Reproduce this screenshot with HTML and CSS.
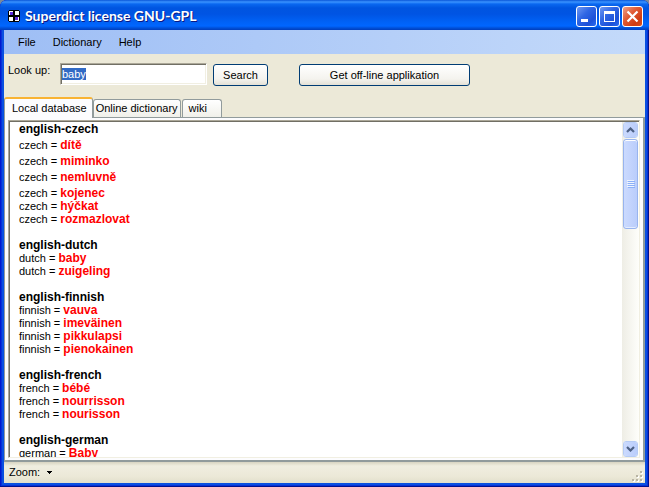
FILE: index.html
```
<!DOCTYPE html>
<html lang="en">
<head>
    <meta charset="utf-8"/>
    <meta content="width=device-width, initial-scale=1.0" name="viewport"/>
    <title>Superdict license GNU-GPL</title>
    <link rel="stylesheet" href="styles.css">
</head>
<body>
    <div class="window">
        <header class="title-bar">
            <svg class="app-icon" width="12" height="12" viewBox="0 0 12 12" shape-rendering="crispEdges">
                <path d="M1 0h10v1h1v10h-1v1H1v-1H0V1h1z" fill="#000"/>
                <path d="M1 1h4v4H1zM7 1h4v4H7zM1 7h4v4H1zM7 7h4v4H7z" fill="#fff"/>
                <path d="M2 2h3v3H2zM7 7h3v3H7z" fill="#5a28e0"/>
            </svg>
            <h1>Superdict license GNU-GPL</h1>
            <div class="window-buttons">
                <button type="button" class="window-button" aria-label="Minimize">
                    <svg width="19" height="19" viewBox="0 0 19 19" shape-rendering="crispEdges"><path d="M4 12h7v3H4z" fill="#fff"/></svg>
                </button>
                <button type="button" class="window-button" aria-label="Maximize">
                    <svg width="19" height="19" viewBox="0 0 19 19" shape-rendering="crispEdges"><path d="M4 4h11v11H4zM5 7v7h9V7z" fill="#fff" fill-rule="evenodd"/></svg>
                </button>
                <button type="button" class="window-button close" aria-label="Close">
                    <svg width="19" height="19" viewBox="0 0 19 19"><path d="M4.500 4.500l10 10M14.500 4.500l-10 10" stroke="#fff" stroke-width="2.200"/></svg>
                </button>
            </div>
        </header>
        <nav class="menu-bar">
            <button type="button">File</button>
            <button type="button">Dictionary</button>
            <button type="button">Help</button>
        </nav>
        <form class="search-form" onsubmit="event.preventDefault()">
            <label for="lookup">Look up:</label>
            <input type="text" id="lookup" value="baby" autocomplete="off" spellcheck="false"/>
            <button type="submit" class="xp-button">Search</button>
            <button type="button" class="xp-button wide">Get off-line applikation</button>
        </form>
        <div class="tabs" role="tablist">
            <button type="button" role="tab" class="tab active" aria-selected="true">Local database</button>
            <button type="button" role="tab" class="tab">Online dictionary</button>
            <button type="button" role="tab" class="tab wiki">wiki</button>
        </div>
        <main class="panel">
            <div class="browser">
                <div class="results">
                    <section>
                        <h2>english-czech</h2>
                        <p class="tall">czech = <b>dítě</b></p>
                        <p class="tall">czech = <b>miminko</b></p>
                        <p class="tall">czech = <b>nemluvně</b></p>
                        <p class="tall">czech = <b>kojenec</b></p>
                        <p>czech = <b>hýčkat</b></p>
                        <p>czech = <b>rozmazlovat</b></p>
                    </section>
                    <section>
                        <h2>english-dutch</h2>
                        <p>dutch = <b>baby</b></p>
                        <p>dutch = <b>zuigeling</b></p>
                    </section>
                    <section>
                        <h2>english-finnish</h2>
                        <p>finnish = <b>vauva</b></p>
                        <p>finnish = <b>imeväinen</b></p>
                        <p>finnish = <b>pikkulapsi</b></p>
                        <p>finnish = <b>pienokainen</b></p>
                    </section>
                    <section>
                        <h2>english-french</h2>
                        <p>french = <b>bébé</b></p>
                        <p>french = <b>nourrisson</b></p>
                        <p>french = <b>nourisson</b></p>
                    </section>
                    <section>
                        <h2>english-german</h2>
                        <p>german = <b>Baby</b></p>
                    </section>
                </div>
                <div class="scrollbar">
                    <button type="button" class="scroll-button" aria-label="Scroll up">
                        <svg width="9" height="6" viewBox="0 0 9 6"><path d="M1 5l3.500-3.500L8 5" fill="none" stroke="#4d6185" stroke-width="2.200"/></svg>
                    </button>
                    <div class="track">
                        <div class="thumb">
                            <svg width="8" height="8" viewBox="0 0 8 8" shape-rendering="crispEdges">
                                <path d="M0 0h7v1H0zM0 2h7v1H0zM0 4h7v1H0zM0 6h7v1H0z" fill="#eef4fe"/>
                                <path d="M1 1h7v1H1zM1 3h7v1H1zM1 5h7v1H1zM1 7h7v1H1z" fill="#8cb0f8"/>
                            </svg>
                        </div>
                    </div>
                    <button type="button" class="scroll-button" aria-label="Scroll down">
                        <svg width="9" height="6" viewBox="0 0 9 6"><path d="M1 1l3.500 3.500L8 1" fill="none" stroke="#4d6185" stroke-width="2.200"/></svg>
                    </button>
                </div>
            </div>
        </main>
        <footer class="status-bar">
            <button type="button" class="zoom">
                Zoom:
                <svg width="5" height="3" viewBox="0 0 5 3" shape-rendering="crispEdges"><path d="M0 0h5v1H4v1H3v1H2V2H1V1H0z"/></svg>
            </button>
            <svg class="grip" width="12" height="12" viewBox="0 0 12 12" shape-rendering="crispEdges">
                <path d="M9 1h2v2H9zM5 5h2v2H5zM9 5h2v2H9zM1 9h2v2H1zM5 9h2v2H5zM9 9h2v2H9z" fill="#fff"/>
                <path d="M8 0h2v2H8zM4 4h2v2H4zM8 4h2v2H8zM0 8h2v2H0zM4 8h2v2H4zM8 8h2v2H8z" fill="#b8b4a3"/>
            </svg>
        </footer>
    </div>
    <script>
        var lookup = document.getElementById('lookup');
        lookup.focus();
        lookup.select();
    </script>
</body>
</html>
```
FILE: styles.css
```
* {
    box-sizing: border-box;
}

body {
    margin: 0;
    background-color: #7a8a9a;
    font-family: "Liberation Sans", Arial, sans-serif;
    font-size: 11px;
    line-height: 13px;
    color: #000;
}

h1, h2, p {
    margin: 0;
}

button,
input {
    margin: 0;
    font: inherit;
    color: inherit;
}

button {
    display: flex;
    align-items: center;
    justify-content: center;
    padding: 0;
    border: none;
    background: none;
    white-space: nowrap;
}

svg {
    display: block;
    flex: none;
}

.window {
    display: flex;
    flex-direction: column;
    height: 100vh;
    padding: 0 4px 4px;
    border-radius: 7px 7px 0 0;
    overflow: hidden;
    background-color: #0a50e0;
    box-shadow: inset -1px -1px #00138c, inset 1px 0 #0019cf, inset -2px -2px #0831d9, inset 2px 0 #0831d9;
}

.title-bar {
    display: flex;
    align-items: center;
    flex: none;
    height: 30px;
    margin: 0 -4px;
    padding: 2px 6px 0 8px;
    background: linear-gradient(#0a56d8 0, #3a93ff 2px, #0a68f0 4px, #0055e0 8px, #0054e3 14px, #0062f6 22px, #0066ff 26px, #0050d8 28px, #003dbc 30px);
}

.title-bar h1 {
    flex: 1;
    margin-left: 5px;
    font-family: Lato, "Trebuchet MS", sans-serif;
    font-size: 14px;
    line-height: 16px;
    color: #fff;
    text-shadow: 1px 1px #0a1883;
}

.window-buttons {
    display: flex;
    gap: 2px;
}

.window-button {
    width: 21px;
    height: 21px;
    border: 1px solid #fff;
    border-radius: 3px;
    background: linear-gradient(135deg, #6f98f2, #2f66e4 40%, #1c50d8 75%, #2a6cf2);
}

.window-button.close {
    background: linear-gradient(135deg, #f0a088, #e05a34 40%, #d03c12 75%, #d8501e);
}

.menu-bar {
    display: flex;
    flex: none;
    gap: 17px;
    height: 24px;
    padding: 0 14px;
    background: linear-gradient(90deg, #9ebef5, #c4dafa);
}

.search-form {
    display: flex;
    align-items: flex-start;
    flex: none;
    padding: 9px 4px 11px;
    background-color: #ece9d8;
}

.search-form label {
    width: 52px;
    padding-top: 1px;
}

.search-form input {
    width: 147px;
    height: 22px;
    padding: 0 1px;
    border: 1px solid;
    border-color: #aca899 #fff #fff #aca899;
    box-shadow: inset 1px 1px #716f64, inset -1px -1px #f1efe2;
    background-color: #fff;
    outline: none;
}

.search-form input::selection {
    background-color: #316ac5;
    color: #fff;
}

.xp-button {
    width: 55px;
    height: 22px;
    margin-left: 6px;
    border: 1px solid #003c74;
    border-radius: 3px;
    background: linear-gradient(#fff, #f4f3ee 70%, #e4e1d6);
}

.xp-button.wide {
    width: 171px;
    margin-left: 31px;
}

.search-form .xp-button {
    margin-top: 1px;
}

.tabs {
    display: flex;
    align-items: flex-end;
    flex: none;
    height: 20px;
    background-color: #ece9d8;
}

.tab {
    height: 18px;
    margin-right: 1px;
    padding: 0 2px;
    border: 1px solid #919b9c;
    border-bottom: none;
    border-radius: 3px 3px 0 0;
    background: linear-gradient(#fff, #f0f0ea);
}

.tab.active {
    position: relative;
    height: 21px;
    margin: 0 0 -1px;
    padding: 0 5px 1px 7px;
    border-top: 2px solid #f8b333;
    background: #fcfcfe;
}

.tab.wiki {
    width: 40px;
    padding: 0 6px;
    justify-content: flex-start;
}

.panel {
    display: flex;
    flex: 1;
    min-height: 0;
    padding: 2px 3px;
    border: 1px solid #919b9c;
    border-right-width: 2px;
    border-bottom-width: 2px;
    background-color: #fcfcfe;
}

.browser {
    display: flex;
    flex: 1;
    min-width: 0;
    border: 1px solid;
    border-color: #aca899 #f1efe2 #f1efe2 #aca899;
    box-shadow: inset 1px 1px #716f64;
    background-color: #fff;
}

.results {
    flex: 1;
    padding: 2px 10px 0;
    overflow: hidden;
}

.results section {
    margin-bottom: 13px;
}

.results h2 {
    font-size: 12px;
    line-height: 13px;
}

.results b {
    font-size: 12px;
    color: #f00;
}

.results .tall {
    padding-top: 3px;
}

.scrollbar {
    display: flex;
    flex-direction: column;
    width: 17px;
    margin-top: 1px;
    background: linear-gradient(90deg, #eeede5, #fefefb);
}

.scroll-button,
.thumb {
    display: flex;
    align-items: center;
    justify-content: center;
    border: 1px solid #fff;
    border-radius: 3px;
    outline: 1px solid #b5cbf5;
    outline-offset: -1px;
    background: linear-gradient(90deg, #cbdafe, #bacdfb);
}

.scroll-button {
    flex: none;
    height: 16px;
    margin: 0 1px;
}

.track {
    flex: 1;
    padding: 1px 1px;
}

.thumb {
    height: 30%;
    border-color: #98b4ee;
    outline: none;
    box-shadow: inset 0 1px #fff, inset 0 -1px #e4edff;
}

.status-bar {
    display: flex;
    align-items: center;
    justify-content: space-between;
    flex: none;
    height: 21px;
    padding: 0 1px 0 5px;
    background: linear-gradient(#d8d4c2, #f0eee0 4px, #ece9d8 14px, #e2dfcc);
}

.zoom {
    gap: 7px;
}

.grip {
    align-self: flex-end;
}
```
